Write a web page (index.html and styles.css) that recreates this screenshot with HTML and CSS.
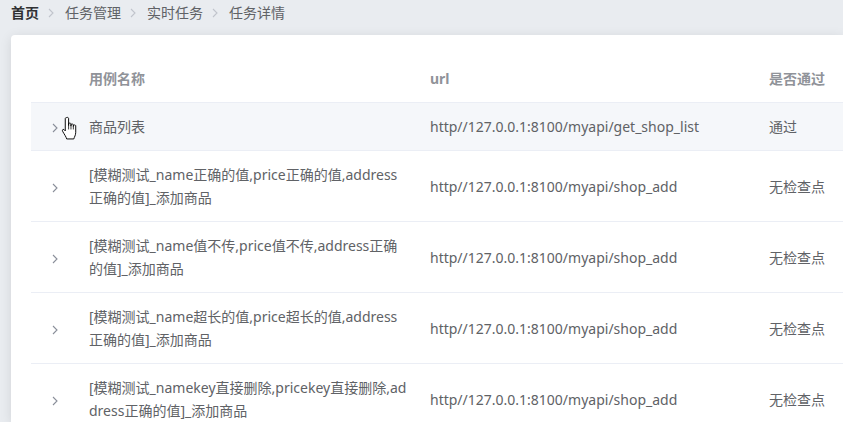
FILE: index.html
```html
<!DOCTYPE html>
<html lang="zh-CN">
<head>
<meta charset="utf-8">
<title>任务详情</title>
<link rel="stylesheet" href="styles.css">
</head>
<body>
<nav class="crumbs">
  <span class="crumb first">首页</span>
  <svg class="sep" viewBox="0 0 8 10" width="8" height="10"><path d="M2 1 L6 5 L2 9" fill="none" stroke="#c0c4cc" stroke-width="1.1"/></svg>
  <span class="crumb">任务管理</span>
  <svg class="sep" viewBox="0 0 8 10" width="8" height="10"><path d="M2 1 L6 5 L2 9" fill="none" stroke="#c0c4cc" stroke-width="1.1"/></svg>
  <span class="crumb">实时任务</span>
  <svg class="sep" viewBox="0 0 8 10" width="8" height="10"><path d="M2 1 L6 5 L2 9" fill="none" stroke="#c0c4cc" stroke-width="1.1"/></svg>
  <span class="crumb">任务详情</span>
</nav>
<main class="card">
  <table class="grid">
    <colgroup>
      <col class="c-exp"><col class="c-name"><col class="c-url"><col class="c-pass">
    </colgroup>
    <thead>
      <tr><th></th><th>用例名称</th><th>url</th><th>是否通过</th></tr>
    </thead>
    <tbody>
      <tr class="hover">
        <td class="exp"><svg class="arrow" viewBox="0 0 6 10" width="6" height="10"><path d="M1 1 L5 5 L1 9" fill="none" stroke="#8a8f9a" stroke-width="1.1"/></svg></td>
        <td>商品列表</td>
        <td>http//127.0.0.1:8100/myapi/get_shop_list</td>
        <td>通过</td>
      </tr>
      <tr>
        <td class="exp"><svg class="arrow" viewBox="0 0 6 10" width="6" height="10"><path d="M1 1 L5 5 L1 9" fill="none" stroke="#8a8f9a" stroke-width="1.1"/></svg></td>
        <td>[模糊测试_name正确的值,price正确的值,address正确的值]_添加商品</td>
        <td>http//127.0.0.1:8100/myapi/shop_add</td>
        <td>无检查点</td>
      </tr>
      <tr>
        <td class="exp"><svg class="arrow" viewBox="0 0 6 10" width="6" height="10"><path d="M1 1 L5 5 L1 9" fill="none" stroke="#8a8f9a" stroke-width="1.1"/></svg></td>
        <td>[模糊测试_name值不传,price值不传,address正确的值]_添加商品</td>
        <td>http//127.0.0.1:8100/myapi/shop_add</td>
        <td>无检查点</td>
      </tr>
      <tr>
        <td class="exp"><svg class="arrow" viewBox="0 0 6 10" width="6" height="10"><path d="M1 1 L5 5 L1 9" fill="none" stroke="#8a8f9a" stroke-width="1.1"/></svg></td>
        <td>[模糊测试_name超长的值,price超长的值,address正确的值]_添加商品</td>
        <td>http//127.0.0.1:8100/myapi/shop_add</td>
        <td>无检查点</td>
      </tr>
      <tr>
        <td class="exp"><svg class="arrow" viewBox="0 0 6 10" width="6" height="10"><path d="M1 1 L5 5 L1 9" fill="none" stroke="#8a8f9a" stroke-width="1.1"/></svg></td>
        <td>[模糊测试_namekey直接删除,pricekey直接删除,address正确的值]_添加商品</td>
        <td>http//127.0.0.1:8100/myapi/shop_add</td>
        <td>无检查点</td>
      </tr>
    </tbody>
  </table>
</main>
<svg class="cursor" viewBox="0 0 20 26" width="19" height="25">
  <path d="M6 1.5 C7 1 8 1.5 8 2.5 L8 10 L8 8 C8.5 7 10 7 10.5 8 L10.5 10.5 L10.5 9 C11 8 12.5 8 13 9 L13 11 L13 10 C13.5 9 15 9 15.5 10 L15.5 17 C15.5 20 14 22 13.5 24 L6 24 C5.5 22 3.5 19 2 16.5 C1 15 1.5 13.5 3 14 L4.5 15.5 L4.5 2.5 C4.5 1.8 5.2 1.5 6 1.5 Z" fill="#fff" stroke="#000" stroke-width="1" stroke-linejoin="round"/>
  <path d="M8 10 L8 14 M10.5 10.5 L10.5 14 M13 11 L13 14" stroke="#000" stroke-width="0.8" fill="none"/>
</svg>
</body>
</html>
```
FILE: styles.css
```css
html, body {
  margin: 0;
  padding: 0;
}
body {
  background: #e9ecf0;
  font-family: "Noto Sans", "Noto Sans CJK SC", sans-serif;
  font-size: 14px;
  color: #606266;
  overflow: hidden;
  width: 843px;
  height: 422px;
  position: relative;
}
.crumbs {
  display: flex;
  align-items: center;
  gap: 8px;
  padding: 1px 11px 0;
  height: 23px;
  line-height: 16px;
}
.crumb {
  color: #606266;
}
.crumb.first {
  color: #303133;
  font-weight: 700;
}
.sep {
  margin: 0 2px 0 0;
}
.card {
  margin: 11px 0 0 11px;
  width: 832px;
  padding: 20px 0 0 20px;
  background: #fff;
  border-radius: 4px 0 0 0;
  box-shadow: 0 2px 12px rgba(0, 0, 0, 0.1);
  box-sizing: border-box;
  height: 387px;
  overflow: hidden;
}
.grid {
  border-collapse: collapse;
  table-layout: fixed;
  width: 860px;
}
.c-exp { width: 48px; }
.c-name { width: 341px; }
.c-url { width: 339px; }
.c-pass { width: 132px; }
.grid th, .grid td {
  padding: 12px 10px;
  line-height: 23px;
  text-align: left;
  vertical-align: middle;
  border-bottom: 1px solid #ebeef5;
  word-break: break-all;
}
.grid th {
  color: #909399;
  font-weight: 700;
}
.grid tr.hover td {
  background: #f5f7fa;
}
.grid td.exp {
  text-align: center;
  padding: 0;
}
.arrow {
  display: inline-block;
  vertical-align: middle;
}
.cursor {
  position: absolute;
  left: 61px;
  top: 116px;
}
```
